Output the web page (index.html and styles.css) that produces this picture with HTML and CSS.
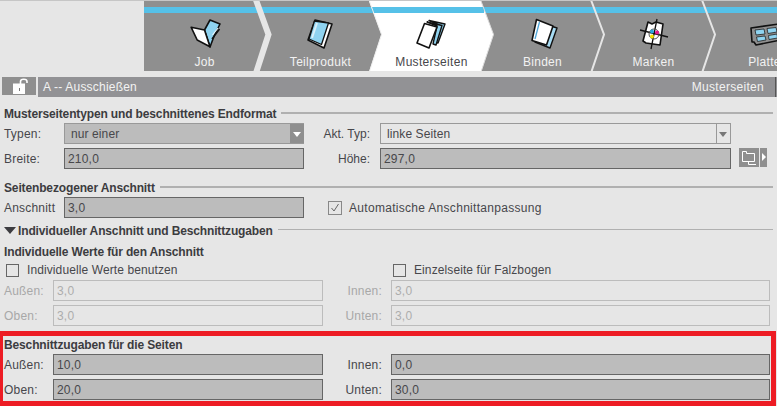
FILE: index.html
```html
<!DOCTYPE html>
<html lang="de">
<head>
    <meta charset="UTF-8" />
    <title>Musterseiten</title>
    <link rel="stylesheet" href="styles.css">
</head>
<body>
    <nav class="tabs">
        <!-- chevron strip, shared coordinates with the page -->
        <svg class="tab-shapes" width="777" height="71" viewBox="0 0 777 71">
            <rect x="144" y="0" width="633" height="71" fill="#8f8f8f"/>
            <rect x="144" y="6" width="633" height="6" fill="#56c1e8"/>
            <path d="M369 0H481L493.500 33.500L481 71H369L381.500 33.500Z" fill="#fff"/>
            <rect x="372" y="6" width="112" height="6" fill="#56c1e8"/>
            <path d="M481 0L493.500 33.500L481 71" fill="none" stroke="#dcdcdc" stroke-width="1"/>
            <path d="M256 -1L268.500 33.500L256 72" fill="none" stroke="#e6e6e6" stroke-width="6"/>
            <path d="M369 -1L381.500 33.500L369 72" fill="none" stroke="#f0f0f0" stroke-width="1"/>
            <path d="M591 -1L604 33.500L591 72" fill="none" stroke="#e6e6e6" stroke-width="2"/>
            <path d="M702 -1L715 33.500L702 72" fill="none" stroke="#e6e6e6" stroke-width="2"/>
        </svg>
        <div class="tab tab-first">
            <svg class="tab-icon" width="32" height="32" viewBox="0 0 32 32">
                <path d="M15.500 12L21 2L31 6L25.500 17L21 29Z" fill="#8fd3f0" stroke="#111" stroke-width="1.600" stroke-linejoin="round"/>
                <path d="M23 21L30.500 11" stroke="#111" stroke-width="1.600"/>
                <path d="M23.500 17L29 10" stroke="#e8f6fc" stroke-width="1.200"/>
                <path d="M2.200 9.300L15.500 12L21 28.700L8.200 22Z" fill="#fff" stroke="#111" stroke-width="1.600" stroke-linejoin="round"/>
            </svg>
            <span>Job</span>
        </div>
        <div class="tab">
            <svg class="tab-icon" width="32" height="32" viewBox="0 0 32 32">
                <path d="M10 2L27 6L19 30L3 22Z" fill="#fff" stroke="#111" stroke-width="1.600" stroke-linejoin="round"/>
                <path d="M9.500 3L23.500 5L16.500 26.500L4 21Z" fill="#8fd3f0" stroke="#111" stroke-width="1.300" stroke-linejoin="round"/>
                <path d="M12 5L7 20" stroke="#d8f0fa" stroke-width="2"/>
            </svg>
            <span>Teilprodukt</span>
        </div>
        <div class="tab tab-active">
            <svg class="tab-icon" width="32" height="32" viewBox="0 0 32 32">
                <path d="M13 2.500L29 6L22 25L19 24L23 7Z" fill="#8fd3f0" stroke="#111" stroke-width="1.400" stroke-linejoin="round"/>
                <path d="M11 4L26 7.500L20 27L17 26L21 8Z" fill="#8fd3f0" stroke="#111" stroke-width="1.400" stroke-linejoin="round"/>
                <path d="M8.500 5.500L21 9L13 30L1 25Z" fill="#fff" stroke="#111" stroke-width="1.600" stroke-linejoin="round"/>
            </svg>
            <span>Musterseiten</span>
        </div>
        <div class="tab">
            <svg class="tab-icon" width="32" height="32" viewBox="0 0 32 32">
                <path d="M12 4L30 10L23 30L8 24Z" fill="#a8dcf4" stroke="#111" stroke-width="1.400" stroke-linejoin="round"/>
                <path d="M9.500 1.500L26 8L19.500 27L5 22.500Z" fill="#fff" stroke="#111" stroke-width="1.600" stroke-linejoin="round"/>
                <path d="M12.500 4L8 21" stroke="#4fa6d8" stroke-width="1.300"/>
            </svg>
            <span>Binden</span>
        </div>
        <div class="tab">
            <svg class="tab-icon" width="32" height="32" viewBox="0 0 32 32">
                <path d="M10 4L14 6L18 4L25 6L22 27L8 25L5 23Z" fill="#fff" stroke="#111" stroke-width="1.600" stroke-linejoin="round"/>
                <path d="M2 12L30 19M19 1L13 31" stroke="#111" stroke-width="1.300"/>
                <circle cx="16" cy="16" r="5" fill="none" stroke="#555" stroke-width="1"/>
                <circle cx="14" cy="13.500" r="2" fill="#2aa7e0"/>
                <circle cx="19" cy="14.500" r="2" fill="#e5178f"/>
                <circle cx="14" cy="18.500" r="2" fill="#f7e400"/>
            </svg>
            <span>Marken</span>
        </div>
        <div class="tab">
            <svg class="tab-icon" width="32" height="32" viewBox="0 0 32 32">
                <path d="M2 10L30 6L32 22L7 27L5 24L3 24Z" fill="#8f8f8f" stroke="#111" stroke-width="1.600" stroke-linejoin="round"/>
                <path d="M6 12L15 11L16 16L7 17ZM18 10.500L27 9.500L28 14L19 15.500ZM7.500 19L16 18L17 22L8.500 23.500ZM19.500 17.500L28 16L28.500 20L20 21.500Z" fill="#8fd3f0" stroke="#222" stroke-width=".8"/>
            </svg>
            <span>Platte</span>
        </div>
    </nav>

    <header class="title-row">
        <div class="lock">
            <svg width="16" height="17" viewBox="0 0 16 17">
                <path d="M7.500 6V3.500C7.500 .5 14 .5 14 3.500V5" fill="none" stroke="#fff" stroke-width="1.600"/>
                <rect x="0" y="5.500" width="12" height="10.500" fill="#fff"/>
                <rect x="6" y="10" width="1" height="3" fill="#777"/>
            </svg>
        </div>
        <div class="title-bar">
            <span>A -- Ausschießen</span>
            <span class="title-right">Musterseiten</span>
        </div>
    </header>

    <main class="form">
        <div class="heading heading-first"><h3>Musterseitentypen und beschnittenes Endformat</h3></div>
        <div class="row row-wide">
            <label>Typen:</label>
            <div class="select select-dark"><span>nur einer</span><i class="arrow"></i></div>
            <label class="label-right">Akt. Typ:</label>
            <div class="select"><span>linke Seiten</span><i class="arrow"></i></div>
        </div>
        <div class="row row-wide row-next">
            <label>Breite:</label>
            <input class="field" value="210,0" readonly>
            <label class="label-right">Höhe:</label>
            <input class="field" value="297,0" readonly>
            <div class="screen-btn">
                <div class="screen-box">
                    <svg width="20" height="19" viewBox="0 0 20 19">
                        <path d="M3.500 3.500H7.500V5.500H15.500V13.500H3.500ZM9.500 13.500V16.500H17" fill="none" stroke="#fff" stroke-width="1"/>
                    </svg>
                </div>
                <div class="screen-more"></div>
            </div>
        </div>

        <div class="heading heading-gap"><h3>Seitenbezogener Anschnitt</h3></div>
        <div class="row row-wide">
            <label>Anschnitt</label>
            <input class="field" value="3,0" readonly>
            <div class="check-cell">
                <span class="check check-on">
                    <svg width="14" height="14" viewBox="0 0 14 14"><path d="M3.500 7L6 10L10.500 3" fill="none" stroke="#666" stroke-width="1"/></svg>
                </span>
                <span>Automatische Anschnittanpassung</span>
            </div>
        </div>

        <div class="heading heading-sub heading-thin">
            <i class="triangle"></i>
            <h3>Individueller Anschnitt und Beschnittzugaben</h3>
        </div>
        <div class="heading heading-plain"><h3>Individuelle Werte für den Anschnitt</h3></div>
        <div class="checks">
            <div class="check-item"><span class="check"></span><span>Individuelle Werte benutzen</span></div>
            <div class="check-item"><span class="check"></span><span>Einzelseite für Falzbogen</span></div>
        </div>
        <div class="row row-pair disabled">
            <label>Außen:</label>
            <input class="field" value="3,0" readonly>
            <label class="label-right">Innen:</label>
            <input class="field" value="3,0" readonly>
        </div>
        <div class="row row-pair row-next disabled">
            <label>Oben:</label>
            <input class="field" value="3,0" readonly>
            <label class="label-right">Unten:</label>
            <input class="field" value="3,0" readonly>
        </div>

        <section class="highlight">
            <div class="heading heading-plain"><h3>Beschnittzugaben für die Seiten</h3></div>
            <div class="row row-pair">
                <label>Außen:</label>
                <input class="field" value="10,0" readonly>
                <label class="label-right">Innen:</label>
                <input class="field" value="0,0" readonly>
            </div>
            <div class="row row-pair row-next">
                <label>Oben:</label>
                <input class="field" value="20,0" readonly>
                <label class="label-right">Unten:</label>
                <input class="field" value="30,0" readonly>
            </div>
        </section>
    </main>
</body>
</html>
```

FILE: styles.css
```css
* {
    box-sizing: border-box;
}
html, body {
    height: 406px;
    overflow: hidden;
}
body {
    margin: 0;
    background-color: #e6e6e6;
    border-top: 1px solid #c6c6c6;
    font-family: "Liberation Sans", Arial, sans-serif;
    font-size: 12px;
    letter-spacing: 0.2px;
    color: #47474b;
}

/* tab strip */
.tabs {
    position: relative;
    display: flex;
    height: 70px;
    padding-left: 144px;
    overflow: hidden;
    letter-spacing: 0.3px;
}
.tab-shapes {
    position: absolute;
    left: 0;
    top: 0;
}
.tab {
    position: relative;
    flex: 0 0 111px;
    display: flex;
    flex-direction: column;
    align-items: center;
    color: #f2f2f2;
    padding-top: 17px;
}
.tab-first {
    flex-basis: 121px;
}
.tab-active {
    color: #47474b;
}
.tab-icon {
    display: block;
    margin-bottom: 5px;
}

/* title row */
.title-row {
    display: flex;
    gap: 2px;
    margin: 6px 0 0 2px;
    align-items: flex-start;
}
.lock {
    width: 34px;
    height: 18px;
    background: #8f8f8f;
    padding: 1px 0 0 11px;
    overflow: hidden;
}
.lock svg {
    display: block;
}
.title-bar {
    flex: 1;
    height: 20px;
    background: #929295;
    color: #f2f2f2;
    display: flex;
    justify-content: space-between;
    align-items: center;
    padding: 0 1px 0 5px;
}
.title-right {
    letter-spacing: 0.3px;
    padding-right: 11px;
    border-right: 1px solid #555;
    line-height: 20px;
}

/* form */
.heading {
    display: flex;
    align-items: center;
    gap: 5px;
    height: 16px;
    padding: 0 4px;
}
.heading::after {
    content: "";
    flex: 1;
    height: 2px;
    background: #b0b0b0;
}
.heading h3 {
    margin: 0;
    padding-top: 1px;
    font-size: 12px;
    letter-spacing: -0.14px;
    color: #3c3c40;
}
.heading-first {
    margin-top: 8px;
    margin-bottom: 2px;
}
.heading-gap {
    margin-top: 10px;
    margin-bottom: 2px;
}
.heading-sub {
    margin-top: 4px;
}
.heading-thin::after {
    height: 1px;
    position: relative;
    top: -1px;
}
.heading-plain::after {
    display: none;
}
.heading-plain {
    margin-top: 5px;
}
.triangle {
    width: 0;
    height: 0;
    border-left: 6px solid transparent;
    border-right: 6px solid transparent;
    border-top: 7px solid #3c3c40;
    margin-right: -3px;
}

.row {
    display: grid;
    height: 21px;
    align-items: center;
    padding-left: 4px;
}
.row-wide {
    grid-template-columns: 60px 240px 76px 351px 46px;
}
.row-pair {
    grid-template-columns: 49px 270px 68px 379px;
}
.row-next {
    margin-top: 4px;
}
.label-right {
    justify-self: end;
    padding-right: 9px;
}
.row-wide .label-right {
    padding-right: 10px;
    letter-spacing: 0;
}
.field {
    height: 21px;
    width: 100%;
    margin: 0;
    padding: 0 3px;
    border: 1px solid #666;
    border-radius: 0;
    outline: none;
    background: #bcbcbc;
    font: inherit;
    letter-spacing: inherit;
    color: #47474b;
}
.disabled label {
    color: #a8a8a8;
}
.disabled .field {
    background: #e6e6e6;
    border-color: #bcbcbc;
    color: #adadad;
}

.select {
    position: relative;
    display: flex;
    align-items: center;
    height: 21px;
    border: 1px solid #999;
    padding-left: 6px;
    letter-spacing: 0.1px;
}
.select .arrow {
    position: absolute;
    right: 0;
    top: 0;
    bottom: 0;
    width: 14px;
    border-left: 1px solid #999;
}
.select .arrow::after {
    content: "";
    position: absolute;
    left: 2px;
    top: 8px;
    border-left: 4px solid transparent;
    border-right: 4px solid transparent;
    border-top: 5px solid #777;
}
.select-dark {
    background: #bcbcbc;
    border-color: #bcbcbc #bcbcbc #bcbcbc #999;
    border-top-color: #999;
    border-bottom-color: #999;
    border-right: 0;
}
.select-dark .arrow {
    background: #8f8f8f;
    border-left: 0;
}
.select-dark .arrow::after {
    left: 3px;
    border-top-color: #fff;
}

.screen-btn {
    display: flex;
    gap: 1px;
    margin-left: 8px;
    height: 19px;
    align-self: start;
}
.screen-box {
    width: 20px;
    height: 19px;
    background: #8f8f8f;
}
.screen-box svg {
    display: block;
}
.screen-more {
    position: relative;
    width: 7px;
    height: 19px;
    background: #8f8f8f;
}
.screen-more::after {
    content: "";
    position: absolute;
    left: 2px;
    top: 5px;
    border-top: 4px solid transparent;
    border-bottom: 4px solid transparent;
    border-left: 4px solid #fff;
}

.check {
    display: block;
    flex: none;
    width: 13px;
    height: 13px;
    border: 1px solid #666;
}
.check svg {
    display: block;
    margin: -1px;
}
.check-on {
    width: 14px;
    height: 14px;
    border-color: #888;
}
.check-cell {
    display: flex;
    align-items: center;
    gap: 7px;
    grid-column: 3 / 5;
    padding-left: 24px;
    letter-spacing: 0.3px;
}
.checks {
    display: grid;
    grid-template-columns: 387px 1fr;
    height: 16px;
    margin-top: 3px;
    margin-bottom: 2px;
    padding-left: 6px;
    letter-spacing: 0.1px;
}
.check-item {
    display: flex;
    align-items: center;
    gap: 8px;
}

.highlight {
    margin-top: 5px;
    width: 776px;
    height: 75px;
    border: 5px solid #ed1c24;
    border-left-width: 3px;
}
.highlight .heading {
    margin-top: 0;
    padding-left: 1px;
    margin-bottom: 2px;
}
.highlight .row {
    padding-left: 1px;
}
```
